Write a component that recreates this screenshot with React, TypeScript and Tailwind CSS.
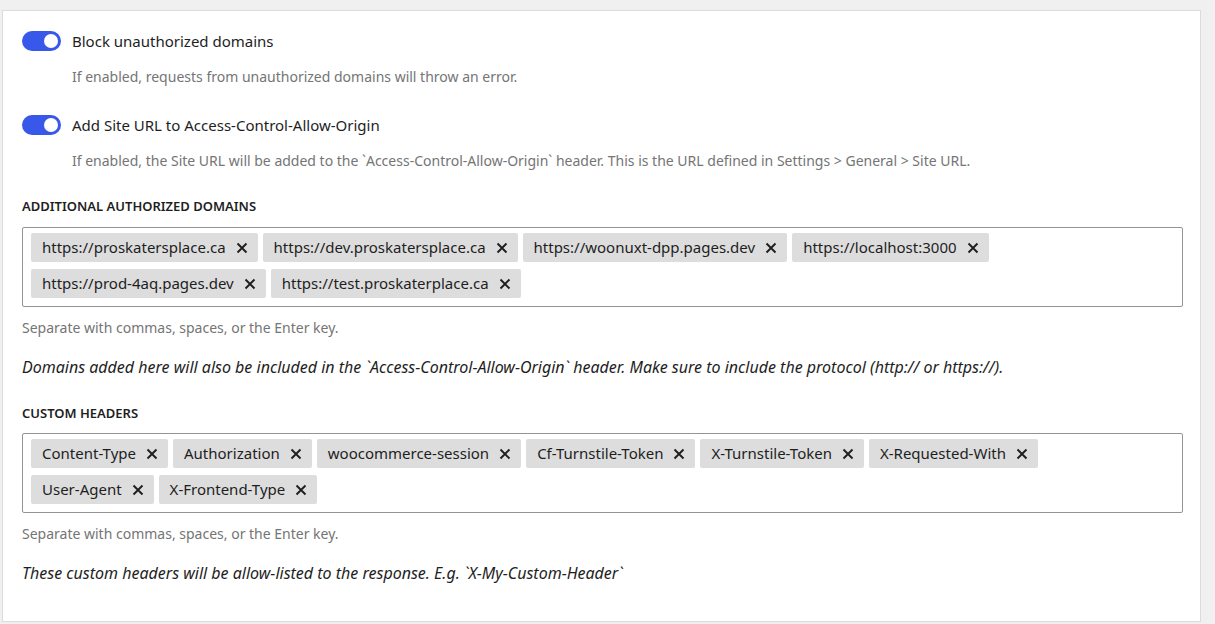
import React from 'react';

const domains = [
  'https://proskatersplace.ca',
  'https://dev.proskatersplace.ca',
  'https://woonuxt-dpp.pages.dev',
  'https://localhost:3000',
  'https://prod-4aq.pages.dev',
  'https://test.proskaterplace.ca',
];

const headers = [
  'Content-Type',
  'Authorization',
  'woocommerce-session',
  'Cf-Turnstile-Token',
  'X-Turnstile-Token',
  'X-Requested-With',
  'User-Agent',
  'X-Frontend-Type',
];

function Toggle() {
  return (
    <span className="flex h-[20px] w-[39px] shrink-0 items-center justify-end rounded-full bg-[#3858e9] pr-[3px]">
      <span className="h-[14px] w-[14px] rounded-full bg-white" />
    </span>
  );
}

function CloseIcon() {
  return (
    <svg width="12" height="12" viewBox="0 0 12 12" className="shrink-0">
      <path d="M1.5 1.5 L10.5 10.5 M10.5 1.5 L1.5 10.5" stroke="#1e1e1e" strokeWidth="1.9" fill="none" />
    </svg>
  );
}

function TokenField({ items }: { items: string[] }) {
  return (
    <div className="flex min-h-[80px] flex-wrap content-start gap-x-[5px] gap-y-[7px] rounded-[2px] border border-[#949494] bg-white pt-[5px] pb-[8px] pl-[8px] pr-[24px]">
      {items.map((item) => (
        <span
          key={item}
          className="flex h-[29px] items-center gap-[10px] rounded-[2px] bg-[#dddddd] pl-[11px] pr-[10px] text-[15px] text-[#1e1e1e]"
        >
          {item}
          <CloseIcon />
        </span>
      ))}
    </div>
  );
}

function ToggleRow({ label, help }: { label: string; help: string }) {
  return (
    <div>
      <div className="flex items-center gap-[11px]">
        <Toggle />
        <span className="text-[15px] leading-[20px] text-[#1e1e1e]">{label}</span>
      </div>
      <p className="mt-[16px] pl-[50px] text-[14px] leading-[20px] text-[#757575]">{help}</p>
    </div>
  );
}

export default function App() {
  return (
    <div className="min-h-[624px] bg-[#f0f0f1] pt-[10px] pl-[2px] pr-[14px] font-['Noto_Sans',sans-serif]">
      <div className="h-[612px] border border-[#dcdcde] bg-white pt-[20px] pl-[19px] pr-[17px]">
        <ToggleRow
          label="Block unauthorized domains"
          help="If enabled, requests from unauthorized domains will throw an error."
        />
        <div className="mt-[28px]">
          <ToggleRow
            label="Add Site URL to Access-Control-Allow-Origin"
            help="If enabled, the Site URL will be added to the `Access-Control-Allow-Origin` header. This is the URL defined in Settings > General > Site URL."
          />
        </div>

        <h3 className="mt-[27px] mb-[13px] text-[13px] leading-[16px] font-semibold uppercase text-[#1e1e1e]">
          Additional Authorized Domains
        </h3>
        <TokenField items={domains} />
        <p className="mt-[11px] text-[14px] leading-[20px] text-[#757575]">
          Separate with commas, spaces, or the Enter key.
        </p>
        <p className="mt-[18px] text-[16px] leading-[22px] italic text-[#1e1e1e]">
          Domains added here will also be included in the `Access-Control-Allow-Origin` header. Make sure to include the protocol (http:// or https://).
        </p>

        <h3 className="mt-[27px] mb-[12px] text-[13px] leading-[16px] font-semibold uppercase text-[#1e1e1e]">
          Custom Headers
        </h3>
        <TokenField items={headers} />
        <p className="mt-[11px] text-[14px] leading-[20px] text-[#757575]">
          Separate with commas, spaces, or the Enter key.
        </p>
        <p className="mt-[18px] text-[16px] leading-[22px] italic text-[#1e1e1e]">
          These custom headers will be allow-listed to the response. E.g. `X-My-Custom-Header`
        </p>
      </div>
    </div>
  );
}
